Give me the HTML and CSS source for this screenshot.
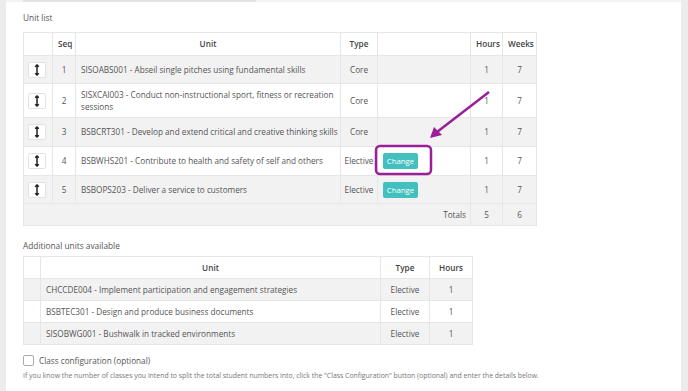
FILE: index.html
```html
<!DOCTYPE html>
<html lang="en">
<head>
    <meta charset="UTF-8">
    <meta name="viewport" content="width=device-width, initial-scale=1.0">
    <link rel="stylesheet" href="styles.css">
    <title>Unit list</title>
</head>
<body>
    <div class="panel">
        <div class="top-strip"><div class="tab-line"></div></div>

        <div class="section-title">Unit list</div>
        <table class="grid units">
            <thead>
                <tr>
                    <th class="c-handle"></th>
                    <th class="c-seq">Seq</th>
                    <th class="c-unit">Unit</th>
                    <th class="c-type">Type</th>
                    <th class="c-action"></th>
                    <th class="c-hours">Hours</th>
                    <th class="c-weeks">Weeks</th>
                </tr>
            </thead>
            <tbody>
                <tr class="odd r1">
                    <td><span class="handle"><svg viewBox="0 0 6 12" width="6" height="12"><path d="M3 1v10M1.2 2.8L3 1l1.8 1.8M1.2 9.2L3 11l1.8-1.8" stroke="#222" stroke-width="1.5" fill="none"/></svg></span></td>
                    <td class="num">1</td>
                    <td class="text">SISOABS001 - Abseil single pitches using fundamental skills</td>
                    <td class="num">Core</td>
                    <td></td>
                    <td class="num">1</td>
                    <td class="num">7</td>
                </tr>
                <tr class="r2">
                    <td><span class="handle"><svg viewBox="0 0 6 12" width="6" height="12"><path d="M3 1v10M1.2 2.8L3 1l1.8 1.8M1.2 9.2L3 11l1.8-1.8" stroke="#222" stroke-width="1.5" fill="none"/></svg></span></td>
                    <td class="num">2</td>
                    <td class="text">SISXCAI003 - Conduct non-instructional sport, fitness or recreation sessions</td>
                    <td class="num">Core</td>
                    <td></td>
                    <td class="num">1</td>
                    <td class="num">7</td>
                </tr>
                <tr class="odd r3">
                    <td><span class="handle"><svg viewBox="0 0 6 12" width="6" height="12"><path d="M3 1v10M1.2 2.8L3 1l1.8 1.8M1.2 9.2L3 11l1.8-1.8" stroke="#222" stroke-width="1.5" fill="none"/></svg></span></td>
                    <td class="num">3</td>
                    <td class="text">BSBCRT301 - Develop and extend critical and creative thinking skills</td>
                    <td class="num">Core</td>
                    <td></td>
                    <td class="num">1</td>
                    <td class="num">7</td>
                </tr>
                <tr class="r4">
                    <td><span class="handle"><svg viewBox="0 0 6 12" width="6" height="12"><path d="M3 1v10M1.2 2.8L3 1l1.8 1.8M1.2 9.2L3 11l1.8-1.8" stroke="#222" stroke-width="1.5" fill="none"/></svg></span></td>
                    <td class="num">4</td>
                    <td class="text">BSBWHS201 - Contribute to health and safety of self and others</td>
                    <td class="num">Elective</td>
                    <td class="action"><button class="btn-change">Change</button></td>
                    <td class="num">1</td>
                    <td class="num">7</td>
                </tr>
                <tr class="odd r5">
                    <td><span class="handle"><svg viewBox="0 0 6 12" width="6" height="12"><path d="M3 1v10M1.2 2.8L3 1l1.8 1.8M1.2 9.2L3 11l1.8-1.8" stroke="#222" stroke-width="1.5" fill="none"/></svg></span></td>
                    <td class="num">5</td>
                    <td class="text">BSBOPS203 - Deliver a service to customers</td>
                    <td class="num">Elective</td>
                    <td class="action"><button class="btn-change">Change</button></td>
                    <td class="num">1</td>
                    <td class="num">7</td>
                </tr>
            </tbody>
            <tfoot>
                <tr>
                    <td colspan="5" class="totals-label">Totals</td>
                    <td class="num">5</td>
                    <td class="num">6</td>
                </tr>
            </tfoot>
        </table>

        <div class="section-title second">Additional units available</div>
        <table class="grid extra">
            <thead>
                <tr>
                    <th class="e-blank"></th>
                    <th class="e-unit">Unit</th>
                    <th class="e-type">Type</th>
                    <th class="e-hours">Hours</th>
                </tr>
            </thead>
            <tbody>
                <tr class="odd">
                    <td></td>
                    <td class="text">CHCCDE004 - Implement participation and engagement strategies</td>
                    <td class="num">Elective</td>
                    <td class="num">1</td>
                </tr>
                <tr>
                    <td></td>
                    <td class="text">BSBTEC301 - Design and produce business documents</td>
                    <td class="num">Elective</td>
                    <td class="num">1</td>
                </tr>
                <tr class="odd">
                    <td></td>
                    <td class="text">SISOBWG001 - Bushwalk in tracked environments</td>
                    <td class="num">Elective</td>
                    <td class="num">1</td>
                </tr>
            </tbody>
        </table>

        <label class="check-row">
            <span class="checkbox"></span>
            Class configuration (optional)
        </label>
        <p class="help">If you know the number of classes you intend to split the total student numbers into, click the "Class Configuration" button (optional) and enter the details below.</p>
    </div>

    <!-- annotation drawn over the screenshot -->
    <svg class="annotation" width="688" height="391" viewBox="0 0 688 391">
        <rect x="376" y="146" width="55" height="28" rx="4" fill="none" stroke="#9a1f98" stroke-width="2.5"/>
        <line x1="489" y1="92" x2="437" y2="132" stroke="#9a1f98" stroke-width="2.5"/>
        <path d="M430 138 L434 127 L442 135 Z" fill="#9a1f98"/>
    </svg>
</body>
</html>
```

FILE: styles.css
```css
body {
    margin: 0;
    background-color: #ececec;
    font-family: 'Open Sans', sans-serif;
    color: #555;
}

.panel {
    margin: 0 7px 0 6px;
    background-color: #fff;
    padding: 0 17px 20px 17px;
    min-height: 391px;
    box-sizing: border-box;
}

.top-strip {
    height: 2px;
    margin: 0 -17px;
    background-color: #f4f4f4;
    padding-left: 17px;
}

.tab-line {
    width: 233px;
    height: 2px;
    background-color: #e2e2e2;
}

.section-title {
    font-size: 8.3px;
    line-height: 12px;
    padding-top: 10px;
    height: 20px;
    color: #555;
}

.section-title.second {
    padding-top: 14px;
    height: 16px;
}

.grid {
    border-collapse: collapse;
    table-layout: fixed;
    font-size: 8.2px;
    color: #555;
}

.grid th,
.grid td {
    box-sizing: border-box;
    border: 1px solid #e6e6e6;
    padding: 0 5px;
    line-height: 12px;
}

.grid th {
    font-weight: 600;
    color: #444;
    text-align: center;
    background-color: #fff;
}

.grid tr.odd td {
    background-color: #f2f2f2;
}

.grid td.num {
    text-align: center;
    padding: 0 2px;
}

.grid td.text {
    text-align: left;
    padding-right: 1px;
}

.units {
    width: 513px;
}

.units thead tr { height: 23px; }
.units .r1 { height: 28px; }
.units .r2 { height: 34px; }
.units .r3 { height: 29px; }
.units .r4 { height: 29px; }
.units .r5 { height: 28px; }
.units tfoot tr { height: 22px; }

.c-handle { width: 29px; }
.c-seq { width: 23px; }
.c-unit { width: 265px; }
.c-type { width: 37px; }
.c-action { width: 93px; }
.c-hours { width: 32px; }
.c-weeks { width: 34px; }

.units td:first-child {
    padding: 0 4px;
}

.handle {
    display: flex;
    align-items: center;
    justify-content: center;
    width: 18px;
    height: 16px;
    box-sizing: border-box;
    border: 1px solid #e2e2e2;
    border-radius: 2px;
    background-color: #fff;
}

.action {
    padding-left: 9px;
}

.btn-change {
    font-family: 'Open Sans', sans-serif;
    font-size: 7.8px;
    color: #fff;
    background-color: #44bfbf;
    border: none;
    border-radius: 2px;
    width: 35px;
    height: 16px;
    padding: 0;
    display: block;
}

.units tfoot td {
    background-color: #f2f2f2;
}

.totals-label {
    text-align: right;
}

.extra {
    width: 449px;
}

.extra tr { height: 22px; }

.e-blank { width: 17px; }
.e-unit { width: 340px; }
.e-type { width: 49px; }
.e-hours { width: 43px; }

.check-row {
    display: flex;
    align-items: center;
    gap: 5px;
    margin-top: 10px;
    font-size: 8.2px;
    color: #555;
}

.checkbox {
    width: 9px;
    height: 9px;
    border: 1px solid #aaa;
    border-radius: 2px;
    background-color: #fff;
}

.help {
    margin: 5px 0 0 0;
    font-size: 6.9px;
    color: #777;
}

.annotation {
    position: absolute;
    left: 0;
    top: 0;
    pointer-events: none;
}
```
